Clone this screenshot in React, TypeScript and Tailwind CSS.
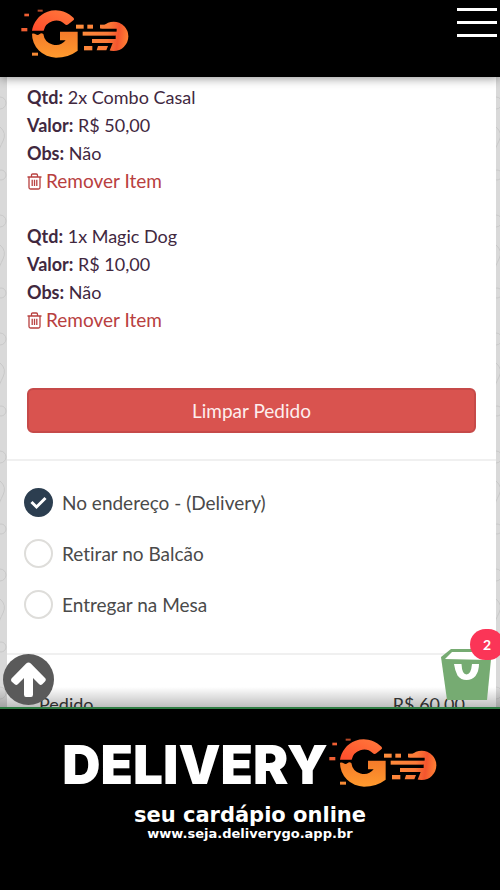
import { useState } from 'react'

type Item = { qtd: number; nome: string; valor: string; obs: string }

const ITENS: Item[] = [
  { qtd: 2, nome: 'Combo Casal', valor: 'R$ 50,00', obs: 'Não' },
  { qtd: 1, nome: 'Magic Dog', valor: 'R$ 10,00', obs: 'Não' },
]

const ENTREGAS = [
  { id: 'delivery', label: 'No endereço - (Delivery)' },
  { id: 'balcao', label: 'Retirar no Balcão' },
  { id: 'mesa', label: 'Entregar na Mesa' },
]

function LogoGo({ id }: { id: string }) {
  const fill = `url(#${id}-bola)`
  return (
    <svg
      viewBox="60 25 330 156"
      className="h-[52px] w-[110px] shrink-0"
      role="img"
      aria-label="Delivery Go"
    >
      <defs>
        <linearGradient id={`${id}-topo`} x1="0" y1="1" x2="1" y2="0">
          <stop offset="0" stopColor="#ff4b2b" />
          <stop offset="1" stopColor="#ff7a3c" />
        </linearGradient>
        <linearGradient id={`${id}-base`} x1="0" y1="0" x2="0" y2="1">
          <stop offset="0" stopColor="#f47a2a" />
          <stop offset="1" stopColor="#ff9a2e" />
        </linearGradient>
        <linearGradient
          id={`${id}-bola`}
          gradientUnits="userSpaceOnUse"
          x1="230"
          y1="90"
          x2="386"
          y2="110"
        >
          <stop offset="0" stopColor="#ff8e3c" />
          <stop offset="0.6" stopColor="#fb7a38" />
          <stop offset="0.8" stopColor="#f4552e" />
          <stop offset="1" stopColor="#ff8235" />
        </linearGradient>
      </defs>

      {/* faíscas */}
      <g fill="#ef5f33">
        <rect x="73" y="42" width="14" height="8" />
        <rect x="113" y="30" width="15" height="6" opacity="0.75" />
        <rect x="64" y="85" width="18" height="10" />
        <rect x="96" y="159" width="18" height="9" fill="#f58a35" />
      </g>

      {/* arco partido */}
      <path
        fill={`url(#${id}-topo)`}
        d="M96 93A72 71 0 0 1 215 50Q226 57 220 62L205 74Q199 78 194 73A38 38 0 0 0 131 93Z"
      />
      <path
        fill={`url(#${id}-base)`}
        d="M96 102Q102 100 107 104Q113 109 119 103Q124 99 130 103A38 38 0 0 0 197 122H180V96H233V153Q205 174 168 174A72 71 0 0 1 96 102Z"
      />

      {/* bola de fogo */}
      <g fill={fill}>
        <circle cx="341" cy="110" r="44" />
        <rect x="228" y="75" width="23" height="12" />
        <rect x="262" y="75" width="17" height="12" />
        <rect x="300" y="75" width="40" height="12" />
      </g>
      <path
        fill="#000"
        d="M290 87H350V96H348V108H347V118H343V130H338L327 158H280V87Z"
      />
      <g fill={fill}>
        <rect x="248" y="96" width="102" height="12" />
        <rect x="276" y="118" width="70" height="12" />
        <rect x="252" y="139" width="25" height="13" />
        <path d="M294 139H324L319 152H290Z" />
      </g>
    </svg>
  )
}

function Rabiscos({ id }: { id: string }) {
  return (
    <svg className="size-full" aria-hidden="true">
      <pattern id={id} width="18" height="118" patternUnits="userSpaceOnUse">
        <g fill="none" stroke="#c8c8c8" strokeWidth="1">
          <circle cx="0" cy="26" r="6" />
          <path d="M0 50q7 6 3 14t-4 10" />
          <circle cx="1" cy="98" r="5" />
        </g>
      </pattern>
      <rect width="100%" height="100%" fill={`url(#${id})`} />
    </svg>
  )
}

function Lixeira() {
  return (
    <svg
      viewBox="0 0 15 17"
      className="h-[17px] w-[15px] shrink-0"
      fill="none"
      stroke="currentColor"
      strokeWidth="1.3"
      aria-hidden="true"
    >
      <path d="M0.5 4H14.5M4.5 4V2.2Q4.5 1 5.7 1H9.3Q10.5 1 10.5 2.2V4M2 4V14.5Q2 16 3.5 16H11.5Q13 16 13 14.5V4M5.2 6.8V13M7.5 6.8V13M9.8 6.8V13" />
    </svg>
  )
}

function ItemPedido({ item }: { item: Item }) {
  return (
    <li className="flex flex-col items-start text-lg leading-7">
      <span>
        <b>Qtd:</b> {item.qtd}x {item.nome}
      </span>
      <span>
        <b>Valor:</b> {item.valor}
      </span>
      <span>
        <b>Obs:</b> {item.obs}
      </span>
      <button
        type="button"
        className="flex items-center gap-1 text-[19px] leading-7 text-[#b8403f]"
      >
        <Lixeira />
        Remover Item
      </button>
    </li>
  )
}

export default function App() {
  const [entrega, setEntrega] = useState('delivery')

  return (
    <div className="flex h-screen flex-col overflow-hidden bg-black font-['Lato',sans-serif]">
      <header className="z-10 flex items-start justify-between bg-black pt-2 pr-[3px] pb-[17px] pl-5 shadow-[0_1px_10px_rgba(0,0,0,0.45)]">
        <LogoGo id="topo" />
        <button type="button" aria-label="Menu" className="flex flex-col gap-2.5">
          <span className="h-[3px] w-10 bg-white" />
          <span className="h-[3px] w-10 bg-white" />
          <span className="h-[3px] w-10 bg-white" />
        </button>
      </header>

      <main className="relative flex min-h-0 flex-1 overflow-hidden bg-[#d9d9d9]">
        <div className="w-[7px] shrink-0">
          <Rabiscos id="rabiscos-esq" />
        </div>

        <div className="min-w-0 flex-1 bg-white text-[19px] leading-7 text-[#41283f] [font-variant-ligatures:none]">
          <section className="px-5 pt-1.5 pb-[26px]">
            <ul className="flex flex-col gap-[27px]">
              {ITENS.map((item) => (
                <ItemPedido key={item.nome} item={item} />
              ))}
            </ul>
            <button
              type="button"
              className="mt-[54px] block h-[45px] w-full rounded-md border-2 border-[#c64a49] bg-[#d9534f] text-[#fdeeee]"
            >
              Limpar Pedido
            </button>
          </section>

          <fieldset className="flex flex-col gap-[22px] border-y-2 border-[#f0f0f0] px-[17px] pt-[27px] pb-[34px] text-[#4a4a4a]">
            {ENTREGAS.map(({ id, label }) => (
              <label key={id} className="flex items-center gap-[9px]">
                <span className="grid shrink-0">
                  <input
                    type="radio"
                    name="entrega"
                    value={id}
                    checked={entrega === id}
                    onChange={() => setEntrega(id)}
                    className="peer col-start-1 row-start-1 size-[29px] appearance-none rounded-full border-2 border-[#deddda] bg-white checked:border-[#2c3e50] checked:bg-[#2c3e50]"
                  />
                  <svg
                    viewBox="0 0 29 29"
                    className="pointer-events-none invisible col-start-1 row-start-1 size-[29px] peer-checked:visible"
                    fill="none"
                    stroke="#fff"
                    strokeWidth="3"
                    aria-hidden="true"
                  >
                    <path d="M7.5 14L12.5 19L21.5 10" />
                  </svg>
                </span>
                {label}
              </label>
            ))}
          </fieldset>

          <p className="flex justify-between pt-[35px] pr-[31px] pl-8 text-lg leading-7 text-[#3a3a3a]">
            <span>Pedido</span>
            <span>R$ 60,00</span>
          </p>
        </div>

        <div className="w-1 shrink-0">
          <Rabiscos id="rabiscos-dir" />
        </div>

        <div className="pointer-events-none absolute inset-x-0 bottom-0 h-5 bg-linear-to-b from-black/0 to-black/25" />

        <button
          type="button"
          aria-label="Voltar ao topo"
          className="absolute bottom-0.5 left-[3px] size-[51px]"
        >
          <svg viewBox="0 0 51 51" className="size-full">
            <circle cx="25.5" cy="25.5" r="25.5" fill="#5a5a5a" />
            <path
              fill="#fff"
              d="M23.2 9.5Q25.5 7.5 27.8 9.5L42.5 24.5Q43.5 26 42 27.5L39 30.5Q37.5 31.5 36 30L30 24V40.5Q30 43 28 43H23Q21 43 21 40.5V24L15 30Q13.5 31.5 12 30.5L8.5 27.5Q7.5 26 8.5 24.5Z"
            />
          </svg>
        </button>

        <button
          type="button"
          aria-label="Carrinho, 2 itens"
          className="absolute right-2 bottom-[7px]"
        >
          <svg viewBox="0 0 51 51" className="size-[51px]" aria-hidden="true">
            <path fill="#76ab72" d="M0 8L10 0H51L46 51H6Z" />
            <path fill="#fff" d="M4 10L11 3H50L48 11Z" />
            <path
              fill="#fff"
              d="M13 15H20.500Q21 25.500 25.500 25.500T31 15H38Q38 22 34.500 27Q31 31 25.500 31Q20 31 16.500 26.500Q14 22 13 15Z"
            />
          </svg>
          <span className="absolute -top-5 -right-3 flex h-[31px] w-[34px] items-center justify-center rounded-full bg-[#fb3557] text-sm font-bold text-white">
            2
          </span>
        </button>
      </main>

      <footer className="flex flex-col items-center border-t-2 border-[#2f7d43] bg-black pt-7 pb-[49px] font-['DejaVu_Sans',sans-serif] font-bold text-white">
        <div className="flex items-end">
          <span className="font-['Inter',sans-serif] text-[53px] leading-12 font-black">
            DELIVERY
          </span>
          <LogoGo id="rodape" />
        </div>
        <p className="mt-3.5 text-[21px] leading-6">seu cardápio online</p>
        <a href="#site" className="text-[13px] leading-[14px]">
          www.seja.deliverygo.app.br
        </a>
      </footer>
    </div>
  )
}
